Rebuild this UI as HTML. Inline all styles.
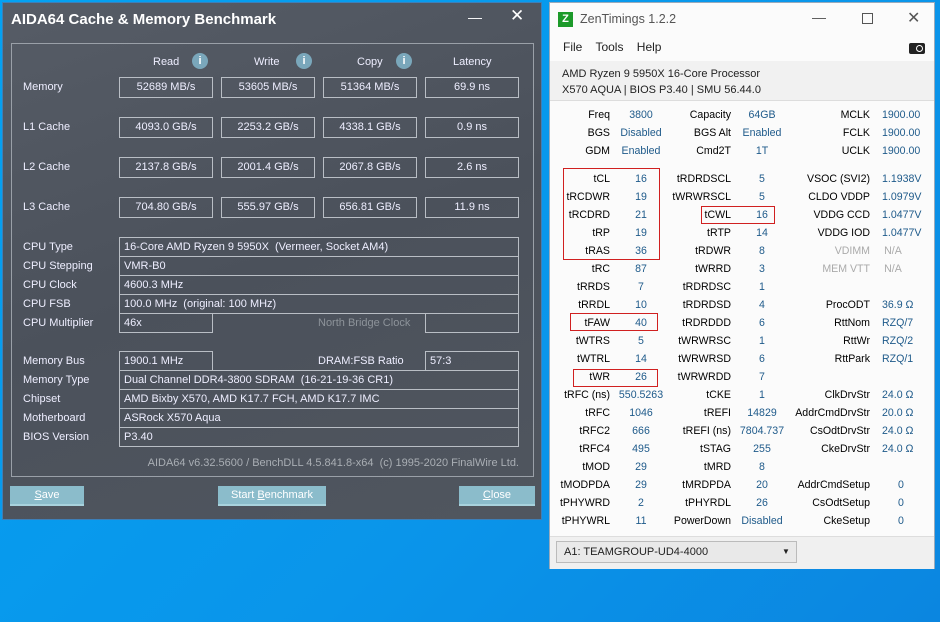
<!DOCTYPE html>
<html><head><meta charset="utf-8"><style>
*{margin:0;padding:0;box-sizing:border-box}
body{width:940px;height:622px;overflow:hidden;position:relative;font-family:"Liberation Sans",sans-serif;background:linear-gradient(135deg,#03a2f2 0%,#0a95ea 60%,#0b86e0 100%)}
.a{position:absolute}
#aida{left:2px;top:2px;width:540px;height:518px;background:linear-gradient(160deg,#565c66 0%,#4b515b 50%,#50565f 100%);border:1px solid #3d7fb8;color:#e8ebee;font-size:11px}
#aida .t{left:8px;top:8px;font-size:15px;font-weight:bold;color:#fff}
.bx{position:absolute;border:1px solid #b9bec5;height:21px;line-height:19px;text-align:center;font-size:11px;color:#eef}
.ib{position:absolute;border:1px solid #b9bec5;height:20px;line-height:18px;padding-left:4px;font-size:11px;color:#eef}
.lb{position:absolute;font-size:11px;line-height:14px;color:#eef}
.ic{position:absolute;width:16px;height:16px;border-radius:50%;background:#7aa7bb;color:#fff;font-weight:bold;font-size:11px;text-align:center;line-height:16px}
.btn{position:absolute;top:486px;height:20px;background:#8bbccb;border-bottom:2px solid #a8d2dd;color:#fff;font-size:11px;text-align:center;line-height:18px}
#zen{left:549px;top:2px;width:386px;height:567px;background:#fbfbfb;border:1px solid #9ab;font-size:11px;color:#222}
.r{position:absolute;text-align:right;line-height:16px;white-space:nowrap;font-size:10.6px}
.v{position:absolute;text-align:center;line-height:16px;color:#1e5a8a;white-space:nowrap;font-size:10.6px}
.rb{position:absolute;border:1px solid #d02020}
</style></head><body>
<div class="a" id="aida">
<div class="a t">AIDA64 Cache &amp; Memory Benchmark</div>
<div class="a" style="left:465px;top:6px;color:#fff;font-size:14px">—</div>
<div class="a" style="left:507px;top:3px;color:#fff;font-size:17px">✕</div>
<div class="a" style="left:8px;top:40px;width:523px;height:434px;border:1px solid #9aa0a8"></div>
</div>
<div class="lb a" style="left:153px;top:55px">Read</div><div class="ic" style="left:192px;top:53px">i</div>
<div class="lb a" style="left:254px;top:55px">Write</div><div class="ic" style="left:296px;top:53px">i</div>
<div class="lb a" style="left:357px;top:55px">Copy</div><div class="ic" style="left:396px;top:53px">i</div>
<div class="lb a" style="left:453px;top:55px">Latency</div>

<div class="lb a" style="left:23px;top:80px">Memory</div>
<div class="bx" style="left:119px;top:77px;width:94px">52689 MB/s</div><div class="bx" style="left:221px;top:77px;width:94px">53605 MB/s</div><div class="bx" style="left:323px;top:77px;width:94px">51364 MB/s</div><div class="bx" style="left:425px;top:77px;width:94px">69.9 ns</div>
<div class="lb a" style="left:23px;top:120px">L1 Cache</div>
<div class="bx" style="left:119px;top:117px;width:94px">4093.0 GB/s</div><div class="bx" style="left:221px;top:117px;width:94px">2253.2 GB/s</div><div class="bx" style="left:323px;top:117px;width:94px">4338.1 GB/s</div><div class="bx" style="left:425px;top:117px;width:94px">0.9 ns</div>
<div class="lb a" style="left:23px;top:160px">L2 Cache</div>
<div class="bx" style="left:119px;top:157px;width:94px">2137.8 GB/s</div><div class="bx" style="left:221px;top:157px;width:94px">2001.4 GB/s</div><div class="bx" style="left:323px;top:157px;width:94px">2067.8 GB/s</div><div class="bx" style="left:425px;top:157px;width:94px">2.6 ns</div>
<div class="lb a" style="left:23px;top:200px">L3 Cache</div>
<div class="bx" style="left:119px;top:197px;width:94px">704.80 GB/s</div><div class="bx" style="left:221px;top:197px;width:94px">555.97 GB/s</div><div class="bx" style="left:323px;top:197px;width:94px">656.81 GB/s</div><div class="bx" style="left:425px;top:197px;width:94px">11.9 ns</div>

<div class="lb a" style="left:23px;top:240px">CPU Type</div><div class="ib" style="left:119px;top:237px;width:400px">16-Core AMD Ryzen 9 5950X &nbsp;(Vermeer, Socket AM4)</div>
<div class="lb a" style="left:23px;top:259px">CPU Stepping</div><div class="ib" style="left:119px;top:256px;width:400px">VMR-B0</div>
<div class="lb a" style="left:23px;top:278px">CPU Clock</div><div class="ib" style="left:119px;top:275px;width:400px">4600.3 MHz</div>
<div class="lb a" style="left:23px;top:297px">CPU FSB</div><div class="ib" style="left:119px;top:294px;width:400px">100.0 MHz &nbsp;(original: 100 MHz)</div>
<div class="lb a" style="left:23px;top:316px">CPU Multiplier</div><div class="ib" style="left:119px;top:313px;width:94px">46x</div>
<div class="lb a" style="left:318px;top:316px;color:#8d939a">North Bridge Clock</div><div class="ib" style="left:425px;top:313px;width:94px"></div>

<div class="lb a" style="left:23px;top:354px">Memory Bus</div><div class="ib" style="left:119px;top:351px;width:94px">1900.1 MHz</div>
<div class="lb a" style="left:318px;top:354px">DRAM:FSB Ratio</div><div class="ib" style="left:425px;top:351px;width:94px">57:3</div>
<div class="lb a" style="left:23px;top:373px">Memory Type</div><div class="ib" style="left:119px;top:370px;width:400px">Dual Channel DDR4-3800 SDRAM &nbsp;(16-21-19-36 CR1)</div>
<div class="lb a" style="left:23px;top:392px">Chipset</div><div class="ib" style="left:119px;top:389px;width:400px">AMD Bixby X570, AMD K17.7 FCH, AMD K17.7 IMC</div>
<div class="lb a" style="left:23px;top:411px">Motherboard</div><div class="ib" style="left:119px;top:408px;width:400px">ASRock X570 Aqua</div>
<div class="lb a" style="left:23px;top:430px">BIOS Version</div><div class="ib" style="left:119px;top:427px;width:400px">P3.40</div>
<div class="lb a" style="right:421px;top:456px;color:#a9aeb4;white-space:nowrap">AIDA64 v6.32.5600 / BenchDLL 4.5.841.8-x64 &nbsp;(c) 1995-2020 FinalWire Ltd.</div>
<div class="btn" style="left:10px;width:74px"><u>S</u>ave</div>
<div class="btn" style="left:218px;width:108px">Start <u>B</u>enchmark</div>
<div class="btn" style="left:459px;width:76px"><u>C</u>lose</div>

<div class="a" id="zen">
<div class="a" style="left:8px;top:9px;width:15px;height:15px;background:#1c9a2a;color:#fff;font-weight:bold;font-size:11px;text-align:center;line-height:15px">Z</div>
<div class="a" style="left:30px;top:9px;font-size:12.5px;color:#555">ZenTimings 1.2.2</div>
<div class="a" style="left:262px;top:6px;color:#555;font-size:14px">—</div>
<div class="a" style="left:312px;top:10px;width:11px;height:11px;border:1px solid #555"></div>
<div class="a" style="left:357px;top:5px;color:#555;font-size:16px">✕</div>
<div class="a" style="left:13px;top:37px;font-size:12px">File &nbsp;&nbsp; Tools &nbsp;&nbsp; Help</div>
<div class="a" style="left:359px;top:40px;width:16px;height:11px;background:#222;border-radius:2px"><div class="a" style="left:7px;top:2px;width:7px;height:7px;border-radius:50%;border:1.5px solid #fff"></div></div>
<div class="a" style="left:0;top:58px;width:384px;height:40px;background:#f1f1f1;border-bottom:1px solid #ddd"></div>
<div class="a" style="left:12px;top:64px;font-size:11px;line-height:15.5px">AMD Ryzen 9 5950X 16-Core Processor<br>X570 AQUA | BIOS P3.40 | SMU 56.44.0</div>
<div class="a" style="left:0;top:533px;width:384px;height:33px;background:#f0f0f0;border-top:1px solid #ddd"></div>
<div class="a" style="left:6px;top:538px;width:241px;height:22px;border:1px solid #bbb;background:#e9e9e9;font-size:11px;line-height:20px;padding-left:7px">A1: TEAMGROUP-UD4-4000<span class="a" style="left:225px;top:0;font-size:8px">▼</span></div>
</div>

<div id="rows"></div>
<script>
var R=[
["Freq","3800","Capacity","64GB","MCLK","1900.00"],
["BGS","Disabled","BGS Alt","Enabled","FCLK","1900.00"],
["GDM","Enabled","Cmd2T","1T","UCLK","1900.00"],
null,
["tCL","16","tRDRDSCL","5","VSOC (SVI2)","1.1938V"],
["tRCDWR","19","tWRWRSCL","5","CLDO VDDP","1.0979V"],
["tRCDRD","21","tCWL","16","VDDG CCD","1.0477V"],
["tRP","19","tRTP","14","VDDG IOD","1.0477V"],
["tRAS","36","tRDWR","8","VDIMM","N/A"],
["tRC","87","tWRRD","3","MEM VTT","N/A"],
["tRRDS","7","tRDRDSC","1","",""],
["tRRDL","10","tRDRDSD","4","ProcODT","36.9 Ω"],
["tFAW","40","tRDRDDD","6","RttNom","RZQ/7"],
["tWTRS","5","tWRWRSC","1","RttWr","RZQ/2"],
["tWTRL","14","tWRWRSD","6","RttPark","RZQ/1"],
["tWR","26","tWRWRDD","7","",""],
["tRFC (ns)","550.5263","tCKE","1","ClkDrvStr","24.0 Ω"],
["tRFC","1046","tREFI","14829","AddrCmdDrvStr","20.0 Ω"],
["tRFC2","666","tREFI (ns)","7804.737","CsOdtDrvStr","24.0 Ω"],
["tRFC4","495","tSTAG","255","CkeDrvStr","24.0 Ω"],
["tMOD","29","tMRD","8","",""],
["tMODPDA","29","tMRDPDA","20","AddrCmdSetup","0"],
["tPHYWRD","2","tPHYRDL","26","CsOdtSetup","0"],
["tPHYWRL","11","PowerDown","Disabled","CkeSetup","0"]];
var h="",y=115;
R.forEach(function(r,i){
 if(!r){y+=10;return;}
 var t=y-8;
 var g=(r[5]=="N/A");
 h+='<div class="r" style="right:330px;top:'+t+'px">'+r[0]+'</div>';
 h+='<div class="v" style="left:601px;width:80px;top:'+t+'px">'+r[1]+'</div>';
 h+='<div class="r" style="right:209px;top:'+t+'px">'+r[2]+'</div>';
 h+='<div class="v" style="left:722px;width:80px;top:'+t+'px">'+r[3]+'</div>';
 h+='<div class="r" style="right:70px;top:'+t+'px;'+(g?'color:#aaa':'')+'">'+r[4]+'</div>';
 var s=r[5]=="0"?'left:881px;width:40px':(g?'left:873px;width:40px':'left:882px;text-align:left');
 h+='<div class="v" style="'+s+';top:'+t+'px;'+(g?'color:#aaa':'')+'">'+r[5]+'</div>';
 y+=18;
});
h+='<div class="rb" style="left:563px;top:168px;width:97px;height:92px"></div>';
h+='<div class="rb" style="left:701px;top:206px;width:74px;height:18px"></div>';
h+='<div class="rb" style="left:570px;top:313px;width:88px;height:18px"></div>';
h+='<div class="rb" style="left:573px;top:369px;width:85px;height:18px"></div>';
document.getElementById("rows").innerHTML=h;
</script>
</body></html>
